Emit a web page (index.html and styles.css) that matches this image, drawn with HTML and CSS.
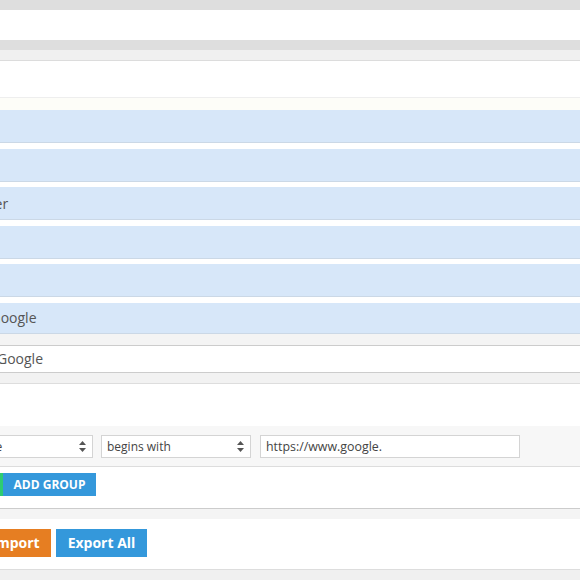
FILE: index.html
```html
<!DOCTYPE html>
<html>
<head>
<meta charset="utf-8">
<link rel="stylesheet" href="styles.css">
</head>
<body>
<div class="page">
  <div class="bar-dark"></div>
  <div class="panel-blank"></div>
  <div class="bar-dark"></div>
  <div class="bar-light"></div>
  <div class="panel-head"></div>
  <div class="panel-note"></div>
  <div class="rule-list">
    <div class="rule"></div>
    <div class="rule"></div>
    <div class="rule rule-parent"><span class="rule-label">Header</span></div>
    <div class="rule"></div>
    <div class="rule"></div>
    <div class="rule"><span class="rule-label">Google</span></div>
  </div>
  <div class="gap-band"></div>
  <div class="rule-edit"><span class="edit-label">Google</span></div>
  <div class="gap-band gap-band-soft"></div>
  <div class="panel-spacer"></div>
  <div class="condition-row">
    <div class="select select-field"><span>Page</span><svg class="arrows" width="7" height="11" viewBox="0 0 7 11"><path d="M3.5 0L7 4H0z M3.5 11L0 7h7z" fill="#555"/></svg></div>
    <div class="select select-op"><span>begins with</span><svg class="arrows" width="7" height="11" viewBox="0 0 7 11"><path d="M3.5 0L7 4H0z M3.5 11L0 7h7z" fill="#555"/></svg></div>
    <div class="text-input">https://www.google.</div>
  </div>
  <div class="group-actions">
    <button class="btn-sm btn-green">ADD RULE</button>
    <button class="btn-sm btn-blue">ADD GROUP</button>
  </div>
  <div class="gap-band gap-band-strong"></div>
  <div class="footer-actions">
    <button class="btn btn-orange">Import</button>
    <button class="btn btn-blue btn-export">Export All</button>
  </div>
  <div class="bar-bottom"></div>
</div>
</body>
</html>
```
FILE: styles.css
```css
html, body {
  margin: 0;
  padding: 0;
  background: #fff;
  overflow: hidden;
}
body {
  font-family: "Open Sans", "Liberation Sans", sans-serif;
  color: #555;
}
.page {
  margin-left: -120px;
  width: 700px;
}
.bar-dark {
  height: 10px;
  background: #dedede;
}
.panel-blank {
  height: 30px;
  background: #fff;
}
.bar-light {
  height: 10px;
  background: #f0f0f0;
  border-bottom: 1px solid #dcdcdc;
}
.panel-head {
  height: 36px;
  background: #fff;
  border-bottom: 1px solid #eeeeee;
}
.panel-note {
  height: 12px;
  background: #fdfdf8;
}
.rule-list {
  display: flex;
  flex-direction: column;
  gap: 5.6px;
}
.rule {
  height: 32px;
  background: #d7e7f9;
  border-bottom: 1px solid #cbd8e6;
  display: flex;
  align-items: center;
  padding-left: 110.5px;
  font-size: 14px;
}
.rule:last-child {
  height: 30px;
}
.rule-parent {
  padding-left: 80px;
}
.rule-label {
  color: #555;
}
.gap-band {
  height: 11px;
  background: #f4f4f4;
  border-bottom: 1px solid #cccccc;
}
.gap-band-soft {
  height: 10px;
  background: #f2f2f2;
  border-bottom: 1px solid #dddddd;
}
.gap-band-strong {
  height: 10px;
  background: #f4f4f4;
  border-top: 1px solid #cccccc;
  border-bottom: none;
}
.rule-edit {
  height: 26px;
  background: #fff;
  border-bottom: 1px solid #cccccc;
  display: flex;
  align-items: center;
  padding-left: 117px;
  font-size: 14px;
}
.panel-spacer {
  height: 42px;
  background: #fff;
}
.condition-row {
  box-sizing: border-box;
  background: #f7f7f7;
  border-bottom: 1px solid #dddddd;
  height: 41px;
  padding: 9px 0 0 89px;
  display: flex;
  align-items: flex-start;
}
.select, .text-input {
  box-sizing: border-box;
  height: 23px;
  background: #fff;
  border: 1px solid #d4d4d4;
  font-size: 12px;
  color: #444;
  display: flex;
  align-items: center;
  padding-left: 5px;
}
.select {
  justify-content: space-between;
  padding-right: 6px;
}
.select-field {
  width: 124px;
  margin-right: 8px;
}
.select-op {
  width: 150px;
  margin-right: 9px;
}
.text-input {
  width: 260px;
  font-size: 12.4px;
  padding-left: 5px;
}
.arrows {
  display: block;
}
.group-actions {
  height: 41px;
  box-sizing: border-box;
  padding: 6px 0 0 43px;
  display: flex;
  align-items: flex-start;
  background: #fff;
}
.btn-sm {
  height: 23px;
  border: none;
  margin: 0;
  font-family: "Open Sans", "Liberation Sans", sans-serif;
  font-weight: 700;
  font-size: 12px;
  color: #fff;
  padding: 0;
  text-align: center;
}
.btn-green {
  width: 80px;
  background: #2ecc71;
}
.btn-blue {
  background: #3498db;
}
.btn-sm.btn-blue {
  width: 93px;
}
.footer-actions {
  height: 51px;
  box-sizing: border-box;
  padding: 10px 0 0 100px;
  display: flex;
  align-items: flex-start;
  gap: 5px;
  background: #fff;
  border-bottom: 1px solid #dddddd;
}
.btn {
  height: 28px;
  border: none;
  margin: 0;
  padding: 0;
  font-family: "Open Sans", "Liberation Sans", sans-serif;
  font-weight: 700;
  font-size: 14px;
  color: #fff;
  text-align: center;
}
.btn-orange {
  width: 71px;
  background: #e67e22;
}
.btn-export {
  width: 91px;
}
.bar-bottom {
  height: 20px;
  background: #f0f0f0;
}
```
